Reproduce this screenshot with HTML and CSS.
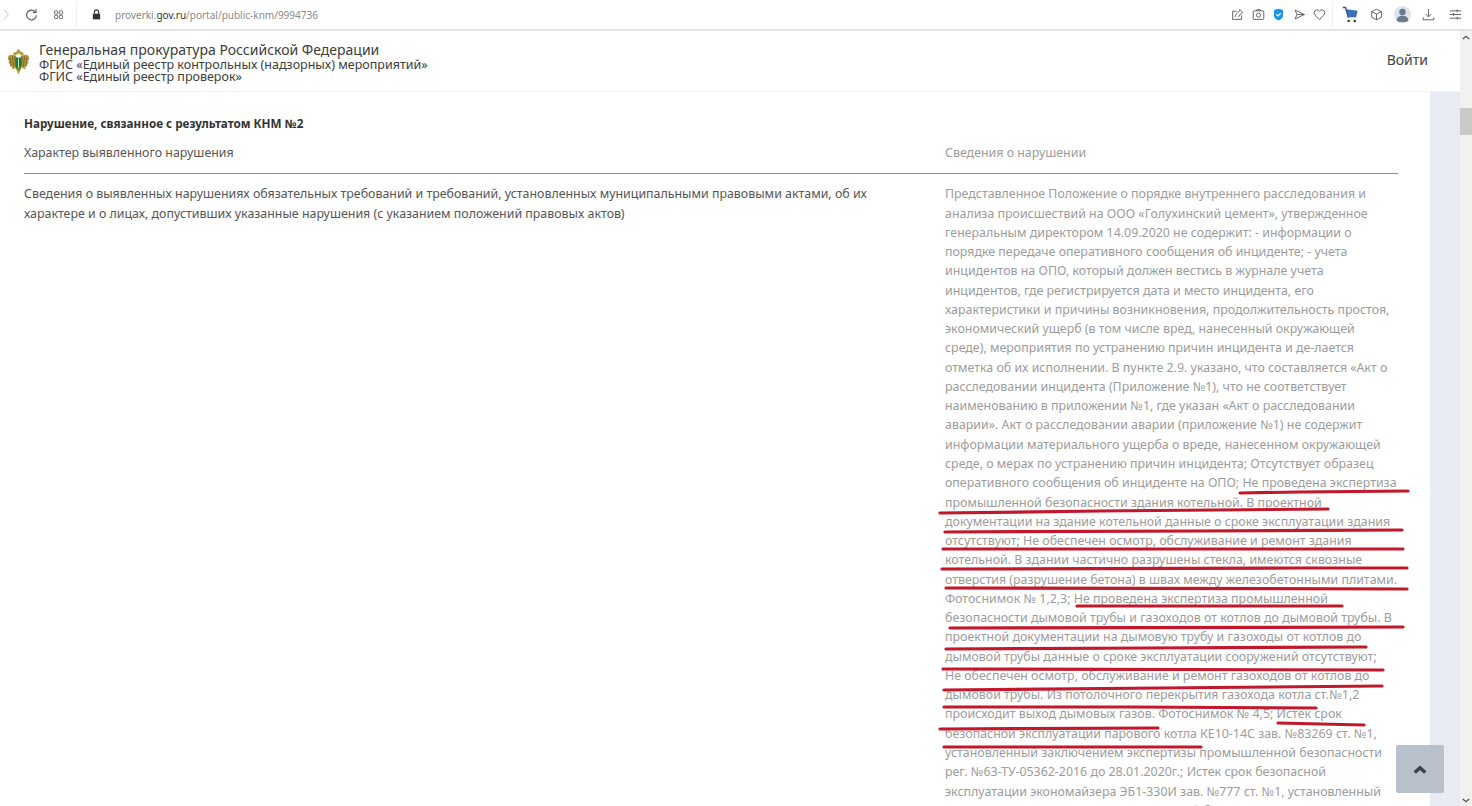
FILE: index.html
```html
<!DOCTYPE html>
<html lang="ru">

<head>
    <meta charset="utf-8" />
    <title>Единый реестр проверок</title>
    <link rel="stylesheet" href="styles.css">
</head>

<body>
    <!-- панель браузера -->
    <div class="toolbar">
        <div class="tool_left">
            <svg class="ico fwd" viewBox="0 0 16 16"><path d="M5 2.5 10.5 8 5 13.5" /></svg>
            <svg class="ico reload" viewBox="0 0 16 16"><path d="M13 5.2A6 6 0 1 0 14 9" /><path d="M13.6 1.6v4h-4" /></svg>
            <svg class="ico apps" viewBox="0 0 16 16"><rect x="3" y="3.5" width="4" height="4" rx="1" /><rect x="9" y="3.5" width="4" height="4" rx="1" /><rect x="3" y="9" width="4" height="4" rx="1" /><rect x="9" y="9" width="4" height="4" rx="1" /></svg>
            <i class="sep"></i>
            <svg class="ico lock" viewBox="0 0 16 16"><path class="solid" d="M3.5 7h9v7h-9z" /><path d="M5.5 7V4.8a2.5 2.5 0 0 1 5 0V7" /></svg>
            <span class="url">proverki.<b>gov.ru</b>/portal/public-knm/9994736</span>
        </div>
        <div class="tool_right">
            <svg class="ico" viewBox="0 0 16 16"><path d="M13 9v5H2V4h5" /><path d="M5 11c.5-3 3-5.500 5-7l1-2 3.500 3.500-2 1-3 4-1 .5" /></svg>
            <svg class="ico" viewBox="0 0 16 16"><rect x="1.500" y="3.500" width="13" height="10.500" rx="1" /><circle cx="8" cy="8.800" r="2.500" /><path d="M5.500 3.500 6 2h4l.5 1.500" /></svg>
            <svg class="ico shield" viewBox="0 0 16 16"><path class="blue" d="M2.500 2.500 8 1l5.500 1.500v7C13.500 12.500 10 14.500 8 15c-2-.5-5.500-2.500-5.500-5.500z" /><path class="tick" d="m5.300 7.800 2 2 3.500-3.300" /></svg>
            <svg class="ico" viewBox="0 0 16 16"><path d="M2.500 2.500 14 8 2.500 13.500 5 8zM5 8h9" /></svg>
            <svg class="ico" viewBox="0 0 16 16"><path d="M8 14C4 11 1.500 8.500 1.500 5.500A3.500 3.500 0 0 1 8 4a3.500 3.500 0 0 1 6.500 1.500C14.500 8.500 12 11 8 14z" /></svg>
            <i class="sep"></i>
            <svg class="ico cart" viewBox="0 0 18 18"><path class="blue2" d="M4.500 3.500 16.500 5l-1.500 7H7z" /><path class="cart_line" d="M.8 1.500h3l3 11" /><circle cx="7" cy="15.800" r="1.300" /><circle cx="13.500" cy="15.800" r="1.300" /></svg>
            <svg class="ico cube" viewBox="0 0 16 16"><path d="M8 1.500 14 4.500v7L8 14.500 2 11.500v-7zM2 4.500 8 7.500l6-3M8 7.500v7" /></svg>
            <span class="avatar"><svg viewBox="0 0 20 20"><circle cx="10" cy="7" r="3.800" /><path d="M3 18c0-4.500 3-6.500 7-6.500s7 2 7 6.500c-2 1.500-12 1.500-14 0z" /></svg></span>
            <svg class="ico" viewBox="0 0 16 16"><path d="M8 1.500v9M4.500 7.500 8 11l3.500-3.500M1.500 11.500v3h13v-3" /></svg>
            <svg class="ico sliders" viewBox="0 0 16 16"><path d="M1 3.500h14M1 8h14M1 12.500h14M10 1.800v3.400M5.500 6.300v3.400M10 10.800v3.400" /></svg>
        </div>
    </div>

    <div class="window">
        <div class="page">
            <header class="site_head">
                <svg class="emblem" viewBox="0 0 24 28">
                    <path class="gold" d="M11 10C8.500 6.500 4.500 6 1.500 8L.8 12l1.500 1-.8 2.500 1.700 1-.4 2.500 2.200.5L5.500 22l3.500-1 2-4z" />
                    <path class="gold" d="M13 10c2.500-3.500 6.500-4 9.500-2l.7 4-1.500 1 .8 2.500-1.700 1 .4 2.500-2.200.5.5 2.500-3.500-1-2-4z" />
                    <path class="gold_dark" d="M3 9.500l1.500 9M5.500 8.500 7 19.500M8 8.500l1 10M21 9.500l-1.500 9M18.500 8.500 17 19.500M16 8.500l-1 10" />
                    <circle class="gold" cx="8.500" cy="6" r="1.900" />
                    <circle class="gold" cx="15.500" cy="6" r="1.900" />
                    <path class="gold" d="M9.500 3.800 12 .6l2.500 3.200V6h-5z" />
                    <path class="gold" d="M8.500 20h7L12 27.500z" />
                    <path class="green" d="M8.800 10h6.400v8.500c0 1.800-1.800 3.300-3.200 4.300-1.400-1-3.200-2.500-3.200-4.300z" />
                    <path class="pale" d="M12 11v10" />
                </svg>
                <div class="head_text">
                    <div class="head_title">Генеральная прокуратура Российской Федерации</div>
                    <div class="head_sub">ФГИС «Единый реестр контрольных (надзорных) мероприятий»</div>
                    <div class="head_sub">ФГИС «Единый реестр проверок»</div>
                </div>
                <a class="login">Войти</a>
            </header>

            <div class="body_wrap">
                <main class="content">
                    <p class="section_title">Нарушение, связанное с результатом КНМ №2</p>
                    <div class="row row_head">
                        <div class="col_left">Характер выявленного нарушения</div>
                        <div class="col_right">Сведения о нарушении</div>
                    </div>
                    <div class="row">
                        <div class="col_left">Сведения о выявленных нарушениях обязательных требований и требований, установленных муниципальными правовыми актами, об их<br>характере и о лицах, допустивших указанные нарушения (с указанием положений правовых актов)</div>
                        <div class="col_right">Представленное Положение о порядке внутреннего расследования и<br>
анализа происшествий на ООО «Голухинский цемент», утвержденное<br>
генеральным директором 14.09.2020 не содержит: - информации о<br>
порядке передаче оперативного сообщения об инциденте; - учета<br>
инцидентов на ОПО, который должен вестись в журнале учета<br>
инцидентов, где регистрируется дата и место инцидента, его<br>
характеристики и причины возникновения, продолжительность простоя,<br>
экономический ущерб (в том числе вред, нанесенный окружающей<br>
среде), мероприятия по устранению причин инцидента и де-лается<br>
отметка об их исполнении. В пункте 2.9. указано, что составляется «Акт о<br>
расследовании инцидента (Приложение №1), что не соответствует<br>
наименованию в приложении №1, где указан «Акт о расследовании<br>
аварии». Акт о расследовании аварии (приложение №1) не содержит<br>
информации материального ущерба о вреде, нанесенном окружающей<br>
среде, о мерах по устранению причин инцидента; Отсутствует образец<br>
оперативного сообщения об инциденте на ОПО; Не проведена экспертиза<br>
промышленной безопасности здания котельной. В проектной<br>
документации на здание котельной данные о сроке эксплуатации здания<br>
отсутствуют; Не обеспечен осмотр, обслуживание и ремонт здания<br>
котельной. В здании частично разрушены стекла, имеются сквозные<br>
отверстия (разрушение бетона) в швах между железобетонными плитами.<br>
Фотоснимок № 1,2,3; Не проведена экспертиза промышленной<br>
безопасности дымовой трубы и газоходов от котлов до дымовой трубы. В<br>
проектной документации на дымовую трубу и газоходы от котлов до<br>
дымовой трубы данные о сроке эксплуатации сооружений отсутствуют;<br>
Не обеспечен осмотр, обслуживание и ремонт газоходов от котлов до<br>
дымовой трубы. Из потолочного перекрытия газохода котла ст.№1,2<br>
происходит выход дымовых газов. Фотоснимок № 4,5; Истек срок<br>
безопасной эксплуатации парового котла КЕ10-14С зав. №83269 ст. №1,<br>
установленный заключением экспертизы промышленной безопасности<br>
рег. №63-ТУ-05362-2016 до 28.01.2020г.; Истек срок безопасной<br>
эксплуатации экономайзера ЭБ1-330И зав. №777 ст. №1, установленный<br>
заключением экспертизы промышленной безопасности рег. №63-</div>
                    </div>
                </main>
                <div class="side_band"></div>
            </div>
        </div>
        <div class="scrollbar">
            <svg class="sb_arrow" viewBox="0 0 10 6"><path d="M1 5 5 1.500 9 5" /></svg>
            <div class="sb_thumb"></div>
            <svg class="sb_arrow sb_down" viewBox="0 0 10 6"><path d="M1 1 5 4.500 9 1" /></svg>
        </div>
    </div>

    <!-- красные подчеркивания поверх скриншота -->
    <svg class="marks" viewBox="0 0 1472 806">
        <path d="M1240 493 1300 492 1408 491" />
        <path d="M940 513 1100 511 1328 509" />
        <path d="M945 532 1200 531 1402 530" />
        <path d="M943 549 1403 549" />
        <path d="M942 569 1300 568 1407 568" />
        <path d="M946 588 1407 589" />
        <path d="M1077 606 1342 606" />
        <path d="M950 628 1403 627" />
        <path d="M946 649 1150 648 1366 647" />
        <path d="M943 669 1383 670" />
        <path d="M944 690 1160 688 1382 686" />
        <path d="M944 707 1130 707 1316 708" />
        <path d="M940 729 1158 728" />
        <path d="M1278 723 1364 725" />
        <path d="M944 747 1201 747" />
    </svg>

    <a class="to_top"><svg viewBox="0 0 16 10"><path d="M2 8.500 8 3l6 5.500" /></svg></a>
</body>

</html>
```

FILE: styles.css
```css
* {
    box-sizing: border-box;
}

html,
body {
    margin: 0;
    padding: 0;
    width: 100%;
    height: 100%;
    overflow: hidden;
    background-color: #fff;
    font-family: "Noto Sans", "Liberation Sans", sans-serif;
}

/* панель браузера */
.toolbar {
    height: 31px;
    display: flex;
    align-items: center;
    justify-content: space-between;
    background-color: #fff;
    border-bottom: 2px solid #e4e4e4;
}

.tool_left,
.tool_right {
    display: flex;
    align-items: center;
}

.ico {
    width: 13px;
    height: 13px;
    fill: none;
    stroke: #555;
    stroke-width: 1.1;
    flex: none;
}

.tool_left .fwd {
    stroke: #bbb;
}

.tool_left .reload {
    margin-left: 12px;
    stroke-width: 1.4;
}

.tool_left .apps {
    margin-left: 14px;
}

.tool_left .sep {
    margin-left: 11px;
}

.tool_left .lock {
    margin-left: 13px;
    stroke: #333;
    stroke-width: 1.5;
}

.solid {
    fill: #333;
    stroke: none;
}

.sep {
    width: 1px;
    height: 26px;
    background-color: #f0f0f0;
    display: block;
}

.url {
    margin-left: 12px;
    font-size: 10px;
    color: #8a8a8a;
}

.url b {
    font-weight: 400;
    color: #333;
}

.tool_right {
    gap: 7.5px;
    padding-right: 10.5px;
}

.blue {
    fill: #1a92e8;
    stroke: none;
}

.tick {
    stroke: #fff;
    stroke-width: 1.6;
}

.tool_right .sep {
    margin: 0 1.5px 0 -2px;
}

.cart {
    width: 17px;
    height: 17px;
    margin-right: 3.5px;
}

.blue2 {
    fill: #3f6fb5;
    stroke: none;
}

.cart_line {
    stroke: #2b5a9c;
    stroke-width: 1.6;
}

.cart circle {
    fill: #333;
    stroke: none;
}

.cube {
    margin-right: 3.5px;
}

.avatar {
    width: 17px;
    height: 17px;
    border-radius: 50%;
    background-color: #dfe4ec;
    display: block;
    margin-right: 3.5px;
    overflow: hidden;
}

.avatar svg {
    display: block;
    width: 17px;
    height: 17px;
    fill: #6d7a8c;
}

.sliders {
    margin-left: 6.5px;
}

/* страница */
.window {
    display: flex;
    height: 775px;
}

.page {
    flex: 1;
    min-width: 0;
    overflow: hidden;
}

.site_head {
    height: 61px;
    display: flex;
    align-items: center;
    padding: 0 32px 0 7px;
    border-bottom: 1px solid #f4f4f6;
}

.emblem {
    width: 23px;
    height: 27px;
    flex: none;
    margin-right: 9px;
}

.gold {
    fill: #b59a3c;
}

.gold_dark {
    fill: none;
    stroke: #6f5f20;
    stroke-width: .9;
}

.green {
    fill: #1f7a45;
}

.pale {
    stroke: #cfe0b0;
    stroke-width: 1;
}

.head_text {
    flex: 1;
    color: #3c3c3c;
}

.head_title {
    font-size: 14px;
    line-height: 19px;
}

.head_sub {
    font-size: 12.5px;
    line-height: 12px;
}

.login {
    font-size: 14px;
    color: #444;
    margin-bottom: 3px;
}

.body_wrap {
    display: flex;
    height: 714px;
}

.content {
    flex: 1;
    min-width: 0;
    padding: 23px 32px 0 24px;
    overflow: hidden;
}

.side_band {
    width: 30px;
    background-color: #e8ebf1;
}

.section_title {
    margin: 0;
    font-size: 11.7px;
    line-height: 16px;
    font-weight: 700;
    color: #333;
}

.row {
    display: grid;
    grid-template-columns: 921px 1fr;
    font-size: 12.4px;
    line-height: 19.27px;
    color: #555;
}

.row_head {
    margin-top: 12px;
    padding-bottom: 11px;
    border-bottom: 1px solid #8c8c8c;
    margin-bottom: 10px;
}

.col_right {
    color: #9c9c9c;
    white-space: nowrap;
}

/* полоса прокрутки */
.scrollbar {
    width: 12px;
    background-color: #f1f1f1;
    position: relative;
}

.sb_thumb {
    position: absolute;
    left: 0;
    top: 77px;
    width: 12px;
    height: 27px;
    background-color: #c9c9c9;
}

.sb_arrow {
    position: absolute;
    left: 2px;
    top: 4px;
    width: 8px;
    height: 5px;
    fill: none;
    stroke: #555;
    stroke-width: 1.6;
}

.sb_down {
    top: auto;
    bottom: 3px;
}

.marks {
    position: absolute;
    left: 0;
    top: 0;
    width: 1472px;
    height: 806px;
    fill: none;
    stroke: #c2182b;
    stroke-width: 3.2;
    stroke-linecap: round;
    pointer-events: none;
}

.to_top {
    position: absolute;
    left: 1396px;
    top: 745px;
    width: 48px;
    height: 48px;
    border-radius: 2px;
    background-color: #b8c0cc;
    display: flex;
    align-items: center;
    justify-content: center;
}

.to_top svg {
    width: 14px;
    height: 9px;
    fill: none;
    stroke: #3a414b;
    stroke-width: 4;
}
```
